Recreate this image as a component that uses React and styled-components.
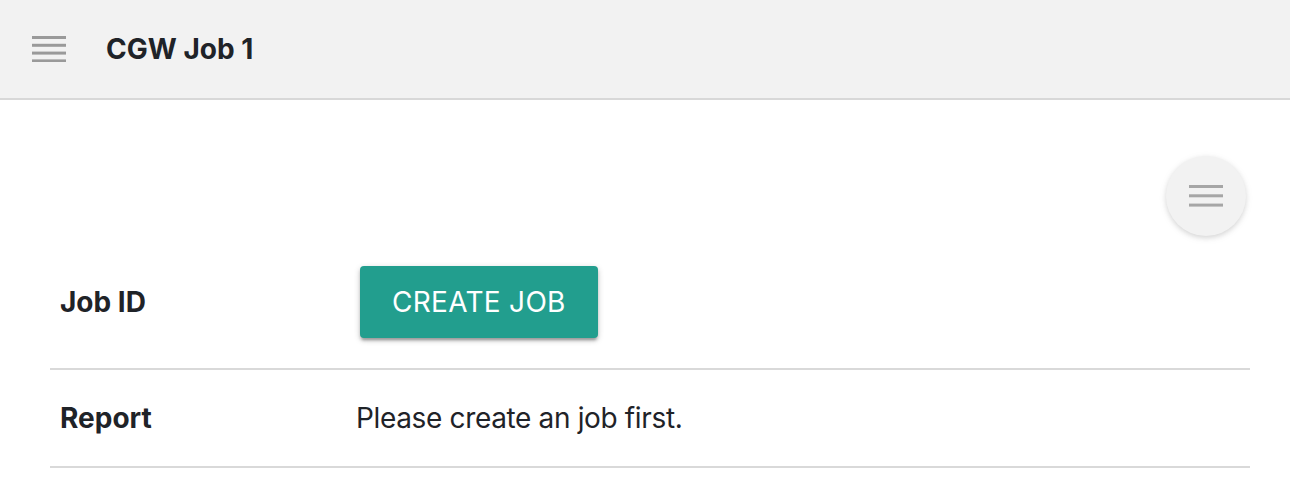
import styled, { createGlobalStyle } from 'styled-components';

const GlobalStyle = createGlobalStyle`
	body {
		margin: 0;
		background: #ffffff;
		font-family: Inter, 'Noto Sans', 'Liberation Sans', sans-serif;
		color: #1f2328;
	}
`;

const Header = styled.header`
	display: flex;
	align-items: center;
	height: 98px;
	padding-left: 32px;
	background: #f2f2f2;
	border-bottom: 2px solid #d8d8d8;
`;

const MenuButton = styled.button`
	display: flex;
	padding: 0;
	border: none;
	background: none;
	margin-right: 40px;
	cursor: pointer;
`;

const Title = styled.h1`
	margin: 0;
	font-size: 28px;
	font-weight: 700;
	color: #1f2328;
`;

const Content = styled.main`
	padding: 0 40px 0 50px;
`;

const Toolbar = styled.div`
	display: flex;
	justify-content: flex-end;
	padding: 56px 4px 0 0;
`;

const Fab = styled.button`
	display: flex;
	align-items: center;
	justify-content: center;
	width: 80px;
	height: 80px;
	padding: 0;
	border: none;
	border-radius: 50%;
	background: #f2f2f2;
	box-shadow: 0 2px 5px rgba(0, 0, 0, 0.12), 0 2px 10px rgba(0, 0, 0, 0.06);
	cursor: pointer;
`;

const Table = styled.table`
	width: 100%;
	border-collapse: collapse;
`;

const Row = styled.tr`
	border-bottom: 2px solid #d9d9d9;
`;

const Label = styled.td`
	width: 276px;
	padding: ${props => (props.tall ? '30px' : '28px')} 10px;
	font-size: 28px;
	font-weight: 700;
	line-height: 40px;
	vertical-align: middle;
`;

const Value = styled.td`
	padding: ${props => (props.tall ? '30px' : '28px')} 10px;
	font-size: 28px;
	line-height: 40px;
	letter-spacing: -0.35px;
	vertical-align: middle;
`;

const PrimaryButton = styled.button`
	display: block;
	height: 72px;
	padding: 0 32px;
	margin-left: 4px;
	border: none;
	border-radius: 4px;
	background: #229e8e;
	color: #ffffff;
	font-family: inherit;
	font-size: 28px;
	letter-spacing: 0.3px;
	text-transform: uppercase;
	box-shadow: 0 3px 3px rgba(0, 0, 0, 0.16), 0 4px 2px -2px rgba(0, 0, 0, 0.14), 0 2px 6px rgba(0, 0, 0, 0.2);
	cursor: pointer;
`;

const MenuIcon = ({ lines = 4, width = 34, gap = 7.8, color = '#9a9a9a' }) => (
	<svg width={width} height={gap * (lines - 1) + 3} viewBox={`0 0 ${width} ${gap * (lines - 1) + 3}`}>
		{Array.from({ length: lines }).map((_, i) => (
			<rect key={i} x="0" y={i * gap} width={width} height="3" fill={color} />
		))}
	</svg>
);

const App = () => (
	<>
		<GlobalStyle />
		<Header>
			<MenuButton aria-label="menu">
				<MenuIcon />
			</MenuButton>
			<Title>CGW Job 1</Title>
		</Header>
		<Content>
			<Toolbar>
				<Fab aria-label="options">
					<MenuIcon lines={3} gap={9.3} color="#a6a6a6" />
				</Fab>
			</Toolbar>
			<Table>
				<tbody>
					<Row>
						<Label tall>Job ID</Label>
						<Value tall>
							<PrimaryButton>Create Job</PrimaryButton>
						</Value>
					</Row>
					<Row>
						<Label>Report</Label>
						<Value>Please create an job first.</Value>
					</Row>
				</tbody>
			</Table>
		</Content>
	</>
);

export default App;
